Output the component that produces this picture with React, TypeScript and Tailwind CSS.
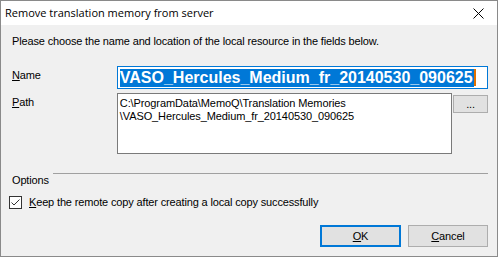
import React from "react";

export default function App() {
  const ui = { fontFamily: '"Liberation Sans", Arial, sans-serif' };
  return (
    <div className="w-[498px] h-[257px] bg-[#f0f0f0] border border-[#8a8a8a] flex flex-col overflow-hidden" style={ui}>
      <div className="h-[24px] bg-white flex items-center justify-between pl-[4px] pr-[13px] shrink-0">
        <span className="text-[11px] text-black" style={{ fontFamily: '"Open Sans", "Noto Sans", sans-serif' }}>
          Remove translation memory from server
        </span>
        <svg width="11" height="11" viewBox="0 0 11 11" className="mt-[1px]">
          <path d="M0.5 0.5 L10.5 10.5 M10.5 0.5 L0.5 10.5" stroke="#000" strokeWidth="1" fill="none" />
        </svg>
      </div>
      <div className="flex-1 flex flex-col pl-[11px] pr-[9px] text-[11px] text-black leading-[13px] tracking-[-0.15px]">
        <div className="mt-[10px]">Please choose the name and location of the local resource in the fields below.</div>
        <div className="mt-[18px] flex">
          <div className="w-[105px] pt-[3px]"><span className="underline">N</span>ame</div>
          <div className="w-[372px] h-[23px] border border-[#0078d7] bg-white flex items-center pl-[2px]">
            <span className="bg-[#0078d7] text-white font-bold text-[16px] leading-[18px] pr-[1px] tracking-normal">
              VASO_Hercules_Medium_fr_20140530_090625
            </span>
            <span className="w-[2px] h-[17px] bg-[#e07000]" />
          </div>
        </div>
        <div className="mt-[4px] flex">
          <div className="w-[105px] pt-[3px]"><span className="underline">P</span>ath</div>
          <div className="w-[336px] h-[61px] border border-[#7a7a7a] bg-white pl-[2px] pt-[3px] text-[11px] leading-[13px] tracking-[-0.1px]">
            <div>C:\ProgramData\MemoQ\Translation Memories</div>
            <div>\VASO_Hercules_Medium_fr_20140530_090625</div>
          </div>
          <div className="ml-[1px] mt-[2px] w-[35px] h-[18px] border border-[#adadad] bg-[#e1e1e1] flex items-center justify-center text-[11px] leading-[11px]">
            ...
          </div>
        </div>
        <div className="mt-[19px] flex items-start">
          <span className="mt-[1px]">Options</span>
          <div className="flex-1 h-px bg-[#a0a0a0] ml-[4px] mt-[0px]" />
        </div>
        <div className="mt-[9px] flex items-center -ml-[3px]">
          <svg width="13" height="13" viewBox="0 0 13 13">
            <rect x="0.5" y="0.5" width="12" height="12" fill="#fff" stroke="#333" />
            <path d="M2.5 6.5 L5 9 L10.5 3.5" stroke="#333" strokeWidth="1" fill="none" />
          </svg>
          <span className="ml-[7px]"><span className="underline">K</span>eep the remote copy after creating a local copy successfully</span>
        </div>
        <div className="mt-auto mb-[9px] flex justify-end gap-[7px]">
          <div className="w-[81px] h-[22px] border-2 border-[#0078d7] bg-[#e1e1e1] flex items-center justify-center">
            <span><span className="underline">O</span>K</span>
          </div>
          <div className="w-[80px] h-[22px] border border-[#adadad] bg-[#e1e1e1] flex items-center justify-center">
            <span><span className="underline">C</span>ancel</span>
          </div>
        </div>
      </div>
    </div>
  );
}
